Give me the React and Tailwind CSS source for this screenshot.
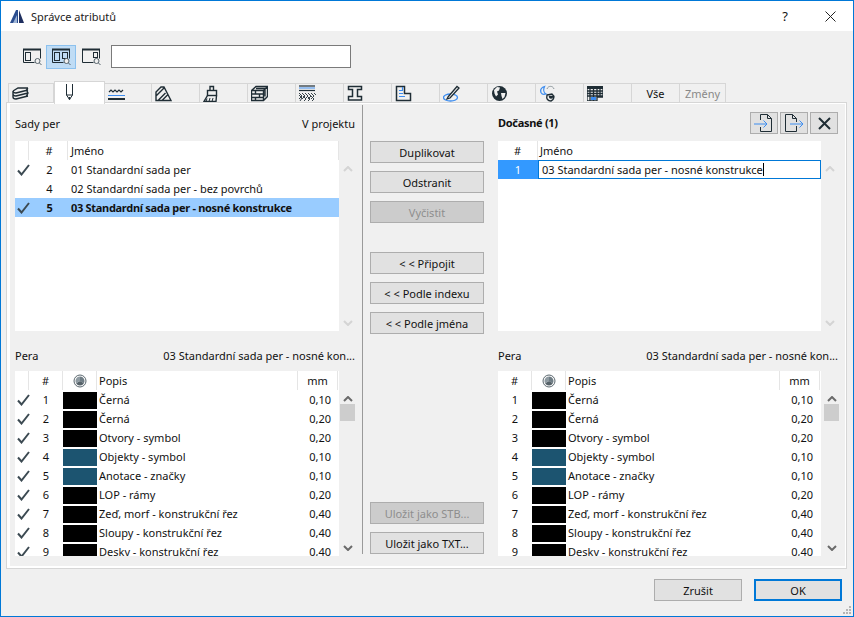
import React from 'react';

const ink = '#1f2d35';
const blue = '#3d8df0';

const Svg = ({ w = 17, h = 17, className = '', children }) => (
  <svg width={w} height={h} viewBox={`0 0 ${w} ${h}`} fill="none" stroke={ink} strokeWidth="1" className={className}>
    {children}
  </svg>
);

// okna s lupou v horni liste
const Magnifier = () => (
  <>
    <circle cx="14.500" cy="13" r="2.500" fill="#f0f0f0" stroke="#55636b" />
    <path d="M16.500 15l2 2" stroke="#55636b" />
  </>
);
const ViewLeft = () => (
  <Svg w={19} h={18}>
    <path d="M.5 1.500v13h11M17.500 1.500v9" />
    <path d="M0 1.500h18" strokeWidth="2" />
    <rect x="2.500" y="4.500" width="5" height="8" />
    <Magnifier />
  </Svg>
);
const ViewBoth = () => (
  <Svg w={19} h={18}>
    <path d="M.5 1.500v13h11M17.500 1.500v9" />
    <path d="M0 1.500h18" strokeWidth="2" />
    <rect x="2.500" y="4.500" width="5" height="8" />
    <rect x="10.500" y="4.500" width="5" height="6" />
    <Magnifier />
  </Svg>
);
const ViewRight = () => (
  <Svg w={19} h={18}>
    <path d="M.5 1.500v13h11M17.500 1.500v9" />
    <path d="M0 1.500h18" strokeWidth="2" />
    <rect x="11.500" y="4.500" width="4" height="5" />
    <Magnifier />
  </Svg>
);

const tabIcons = [
  <Svg key="layers">
    <path d="M1 6l5-3h10M1 6c0 1.500 1 2 3 2l12-3M1 9c0 1.500 1 2 3 2l12-3M1 12c0 1.500 1 2 3 2l12-3M1 6v6M16 3l-1.500 2 1.500 3-1.500 3" strokeWidth="1.400" />
  </Svg>,
  <Svg key="pen" w={9} h={17}>
    <path d="M1.500 0v11l3 4.500 3-4.500V0M1.500 11h6" />
    <path d="M4.500 13v2.500" strokeWidth="1.500" />
  </Svg>,
  <Svg key="line">
    <path d="M1 7l2-2 2 2 2-2 2 2 2-2 2 2 2-2" strokeWidth="1.200" />
    <path d="M0 10.500h17" stroke={blue} />
    <path d="M0 14h17" strokeWidth="2" />
  </Svg>,
  <Svg key="hatch">
    <path d="M1 15.500V7l5-5h3l7 13.500zM1 11l8-8M3.500 15l7-7M7.500 15l5-5" strokeWidth="1.400" />
  </Svg>,
  <Svg key="brush">
    <rect x="4.500" y="5.500" width="9" height="5" strokeWidth="1.400" />
    <path d="M7 5.500V1.500h3.500v4M4.500 10.500L1 16.500h12l.5-6" strokeWidth="1.400" />
    <path d="M4 13.500l-1 3M7 13l-1 3.500M10 13l-1 3.500" />
  </Svg>,
  <Svg key="bricks">
    <path d="M.5 5.500L5 1.500h11.500v10l-4 4H.5zM.5 5.500h12v10M12.500 5.500l4-4M.5 9h12M.5 12.500h12M4.500 5.500V9M8.500 9v3.500M4.500 12.500v3M14 4.500v7M5 3.500h9" strokeWidth="1.400" />
  </Svg>,
  <Svg key="composite">
    <path d="M0 1h16" strokeWidth="1.200" />
    <path d="M0 3h16" stroke={blue} />
    <path d="M0 5.500h16" strokeWidth="1.200" />
    <path d="M0 8l3 3-3 3M3 8l3 3-3 3M6 8l3 3-3 3M9 8l3 3-3 3M12 8l3 3-3 3M15 8l2 2M0 10l3 3-2 3M4 11l3 3-2 2M8 11l3 3-2 2M12 11l3 3-2 2" stroke="#37434a" />
  </Svg>,
  <Svg key="profile">
    <path d="M1.500 1.500h13v3h-4v7h4v3.500h-13v-3.500h4v-7h-4z" strokeWidth="1.500" />
  </Svg>,
  <Svg key="zone">
    <path d="M1.500 1.500h8v7h6v7h-14z" strokeWidth="1.500" />
    <path d="M4 5.500h4M4 8.500h4M4 11.500h6M7.500 2v3" stroke={blue} strokeWidth="1.200" />
  </Svg>,
  <Svg key="pencil">
    <ellipse cx="7.500" cy="12.500" rx="7" ry="3.500" stroke={blue} strokeWidth="1.300" />
    <path d="M5 12l9-10.500 2 1.500-9 10-3 1z" fill="#f0f0f0" strokeWidth="1.300" />
  </Svg>,
  <Svg key="globe">
    <circle cx="8.500" cy="8.500" r="7.500" fill={ink} strokeWidth="0" />
    <path d="M3 5l3-3 3 .5-1 3-2 1 1 3-2 2-1.500-3zM10 8h4.500l-1 4-2 2-1-3z" fill="#f0f0f0" strokeWidth="0" />
  </Svg>,
  <Svg key="surface">
    <path d="M5.500 1.500c-3 1-4.500 3-3.500 6 1 2 3.500 2 5 1.500-2-1-3-4-1.500-7.500z" stroke={blue} strokeWidth="1.300" />
    <path d="M8 4c1-3.500 6-3.500 7 0" stroke="#8d979c" />
    <path d="M8 10l5-1c3 2 2 6-1 7-3 0-5-2-4-6zM10.500 11.500a1.500 1.500 0 1 0 3 0z" strokeWidth="1.400" />
  </Svg>,
  <Svg key="grid" w={16} h={15}>
    <rect x="0" y="0" width="16" height="3" fill={ink} strokeWidth="0" />
    <path d="M0 0h16v11h-6v4H0zM0 5h16M0 7.500h16M0 10h16M3 0v15M6.500 0v15M10 0v11M13 0v11" stroke={ink} strokeWidth="1.300" />
    <rect x="4" y="11" width="5" height="3" fill={blue} strokeWidth="0" />
  </Svg>,
];

const tabWidths = [46, 51, 47, 48, 48, 48, 48, 48, 48, 48, 48, 48, 48, 48, 46];

const Btn = ({ children, disabled, className = '' }) => (
  <div
    className={`h-[22px] flex items-center justify-center border border-[#adadad] ${
      disabled ? 'bg-[#cccccc] text-[#8e8e8e]' : 'bg-[#e1e1e1] text-[#111]'
    } ${className}`}
  >
    {children}
  </div>
);

const Chevron = ({ down, light }) => (
  <svg width="10" height="6" viewBox="0 0 10 6" fill="none" stroke={light ? '#d4d4d4' : '#6a6a6a'} strokeWidth="2">
    <path d={down ? 'M1 1l4 4 4-4' : 'M1 5l4-4 4 4'} />
  </svg>
);

const Check = () => (
  <svg width="13" height="12" viewBox="0 0 13 12" fill="none" stroke="#3c4a52" strokeWidth="2">
    <path d="M1 6.500l3.500 4L12 1" />
  </svg>
);

const HeadCell = ({ className = '', children }) => (
  <div className={`h-full flex items-center border-r border-[#e5e5e5] ${className}`}>{children}</div>
);

const PenWheel = () => (
  <svg width="14" height="14" viewBox="0 0 14 14" fill="none">
    <circle cx="7" cy="7" r="6" fill="#f8f8f8" stroke="#5b686f" />
    <path d="M7 7V2.500A4.500 4.500 0 0 1 10.900 9.250z" fill="#6f7d85" />
    <path d="M7 7l3.900 2.250A4.500 4.500 0 0 1 3.100 9.250z" fill="#566269" />
    <path d="M7 7L3.100 9.250A4.500 4.500 0 0 1 7 2.500z" fill="#8e9aa1" />
  </svg>
);

const Scrollbar = ({ light, thumb, className = '' }) => (
  <div className={`pt-[25px] pb-[5px] flex flex-col items-center justify-between ${className}`}>
    <div className="w-full flex flex-col items-center">
      <Chevron light={light} />
      {thumb && <div className="mt-[2px] w-full h-[17px] bg-[#cdcdcd]" />}
    </div>
    <Chevron down light={light} />
  </div>
);

const pens = [
  [1, '#000', 'Černá', '0,10'],
  [2, '#000', 'Černá', '0,20'],
  [3, '#000', 'Otvory - symbol', '0,20'],
  [4, '#1c5470', 'Objekty - symbol', '0,10'],
  [5, '#1c5470', 'Anotace - značky', '0,10'],
  [6, '#000', 'LOP - rámy', '0,20'],
  [7, '#000', 'Zeď, morf - konstrukční řez', '0,40'],
  [8, '#000', 'Sloupy - konstrukční řez', '0,40'],
  [9, '#000', 'Desky - konstrukční řez', '0,40'],
];

const PenList = ({ checks }) => (
  <div className="flex-1 h-[185px] bg-white overflow-hidden">
    <div className="h-[19px] flex items-center">
      {checks && <HeadCell className="w-[14px]" />}
      <HeadCell className="w-[34px] justify-center">#</HeadCell>
      <HeadCell className="w-[34px] justify-center"><PenWheel /></HeadCell>
      <HeadCell className="flex-1 pl-[2px]">Popis</HeadCell>
      <HeadCell className="w-[40px] justify-center">mm</HeadCell>
      <div className="w-px" />
    </div>
    {pens.map(([n, color, name, mm]) => (
      <div key={n} className="h-[19px] flex items-center">
        {checks && <div className="w-[14px] pl-[2px]"><Check /></div>}
        <div className="w-[34px] text-center">{n}</div>
        <div className="w-[34px] h-[17px] mt-[2px]" style={{ backgroundColor: color }} />
        <div className="flex-1 pl-[2px]">{name}</div>
        <div className="w-[41px] text-right pr-[8px]">{mm}</div>
      </div>
    ))}
  </div>
);

const sets = [
  { check: true, n: 2, name: '01 Standardní sada per' },
  { check: false, n: 4, name: '02 Standardní sada per - bez povrchů' },
  { check: true, n: 5, name: '03 Standardní sada per - nosné konstrukce', active: true },
];

const FileArrow = ({ flip }) => (
  <svg width="20" height="18" viewBox="0 0 20 18" fill="none" stroke={ink}>
    {flip ? (
      <>
        <path d="M1.500 13V.5h7l4 4V8M1.500 13v4.500h11V12M8.500.5v4h4" />
        <path d="M6 10h13M15.500 6.500l3.500 3.500-3.500 3.500" stroke={blue} />
      </>
    ) : (
      <>
        <path d="M6.500 6V.5h7l4 4v13h-11V13M13.500.5v4h4" />
        <path d="M0 10h13M9.500 6.500l3.500 3.500-3.500 3.500" stroke={blue} />
      </>
    )}
  </svg>
);

const IconBtn = ({ children }) => (
  <div className="w-[28px] h-[22px] flex items-center justify-center border border-[#adadad] bg-[#e1e1e1]">{children}</div>
);

export default function App() {
  return (
    <div
      className="w-[854px] h-[617px] flex flex-col bg-[#f0f0f0] border border-[#0078d7] text-[11px] leading-none text-[#111] overflow-hidden"
      style={{ fontFamily: '"Noto Sans", sans-serif' }}
    >
      {/* titulek */}
      <div className="h-[30px] shrink-0 bg-white flex items-center">
        <svg width="14" height="15" viewBox="0 0 14 15" className="ml-[9px]">
          <path d="M0 14L6 1h2v13z" fill="#2a4d8f" />
          <path d="M9 1l5 13H9z" fill="#1f2f5f" />
          <path d="M3 14l4-8v8z" fill="#9db4d6" />
        </svg>
        <span className="ml-[7px] text-[#222]">Správce atributů</span>
        <span className="ml-auto text-[13px] mr-[37px]">?</span>
        <svg width="11" height="11" viewBox="0 0 11 11" stroke="#222" className="mr-[17px]">
          <path d="M.5.5l10 10M10.500.5l-10 10" />
        </svg>
      </div>

      {/* horni lista */}
      <div className="h-[50px] shrink-0 flex items-center pl-[19px] pt-[1px]">
        <div className="w-[25px] h-6 flex items-center justify-center mr-px"><ViewLeft /></div>
        <div className="w-[30px] h-6 flex items-center justify-center bg-[#bfdcf5] border border-[#8cc1ee]"><ViewBoth /></div>
        <div className="w-[30px] h-6 flex items-center justify-center"><ViewRight /></div>
        <div className="ml-[5px] w-[240px] h-[23px] bg-white border border-[#7a7a7a]" />
      </div>

      {/* zalozky */}
      <div className="h-[21px] shrink-0 pl-[7px] flex items-end relative z-10">
        {tabWidths.map((w, i) => {
          const active = i === 1;
          const label = i === 13 ? 'Vše' : i === 14 ? 'Změny' : null;
          return (
            <div
              key={i}
              style={{ width: w }}
              className={`flex items-center border-t border-r border-[#d6d6d6] ${i === 0 ? 'border-l' : ''} ${
                active ? 'h-[23px] -mb-[2px] bg-white pl-[10px] pb-[2px] border-l' : 'h-[19px] pl-[3px]'
              } ${label ? 'justify-center !pl-0' : ''} ${i === 14 ? 'text-[#888]' : ''}`}
            >
              {label || tabIcons[i]}
            </div>
          );
        })}
      </div>

      {/* panel */}
      <div className="ml-[5px] mr-[6px] h-[467px] shrink-0 border border-[#d6d6d6] bg-white">
        <div className="ml-[3px] mr-px mt-px h-[462px] bg-[#f0f0f0] flex">
          {/* levy sloupec */}
          <div className="w-[352px] pl-[5px] pr-[7px] flex flex-col">
            <div className="h-[37px] flex items-end justify-between pb-[12px]">
              <span>Sady per</span>
              <span>V projektu</span>
            </div>
            <div className="flex h-[190px]">
              <div className="flex-1 bg-white">
                <div className="h-[19px] flex items-center">
                  <HeadCell className="w-[14px]" />
                  <HeadCell className="w-[39px] justify-center pl-[2px]">#</HeadCell>
                  <HeadCell className="flex-1 pl-[3px]">Jméno</HeadCell>
                </div>
                {sets.map((s) => (
                  <div key={s.n} className={`h-[19px] flex items-center ${s.active ? 'bg-[#99ccff] font-bold tracking-[-0.3px]' : ''}`}>
                    <div className="w-[14px] pl-[2px]">{s.check && <Check />}</div>
                    <div className="w-[39px] text-center pl-[2px]">{s.n}</div>
                    <div className="flex-1 pl-[3px]">{s.name}</div>
                  </div>
                ))}
              </div>
              <Scrollbar light className="ml-px w-[15px]" />
            </div>
            <div className="h-[40px] flex items-end justify-between pb-[10px]">
              <span>Pera</span>
              <span>03 Standardní sada per - nosné kon...</span>
            </div>
            <div className="flex">
              <PenList checks />
              <Scrollbar thumb className="ml-px w-[15px]" />
            </div>
          </div>

          {/* prostredni tlacitka */}
          <div className="w-[123px] h-[449px] border-l border-[#9a9a9a] mt-[1px] pl-[7px] pr-px pt-[36px] flex flex-col">
            <Btn>Duplikovat</Btn>
            <Btn className="mt-2">Odstranit</Btn>
            <Btn className="mt-2" disabled>Vyčistit</Btn>
            <Btn className="mt-[29px]">&lt; &lt; Připojit</Btn>
            <Btn className="mt-2">&lt; &lt; Podle indexu</Btn>
            <Btn className="mt-2">&lt; &lt; Podle jména</Btn>
            <Btn className="mt-auto" disabled>Uložit jako STB...</Btn>
            <Btn className="mt-2">Uložit jako TXT...</Btn>
          </div>

          {/* pravy sloupec */}
          <div className="flex-1 pl-[13px] pr-[7px] flex flex-col">
            <div className="h-[37px] flex items-start justify-between">
              <span className="font-bold tracking-[-0.3px] mt-[13px]">Dočasné (1)</span>
              <div className="flex gap-[2px] mt-[8px]">
                <IconBtn><FileArrow /></IconBtn>
                <IconBtn><FileArrow flip /></IconBtn>
                <IconBtn>
                  <svg width="13" height="13" viewBox="0 0 13 13" stroke={ink} strokeWidth="2"><path d="M1 1l11 11M12 1L1 12" /></svg>
                </IconBtn>
              </div>
            </div>
            <div className="flex h-[190px]">
              <div className="flex-1 bg-white">
                <div className="h-[19px] flex items-center">
                  <HeadCell className="w-[40px] justify-center">#</HeadCell>
                  <div className="pl-[2px]">Jméno</div>
                </div>
                <div className="h-[19px] flex items-center">
                  <div className="w-[40px] h-full flex items-center justify-center bg-[#3399ff] text-white">1</div>
                  <div className="flex-1 h-full flex items-center border border-[#0078d7] pl-[3px]">
                    03 Standardní sada per - nosné konstrukce
                    <span className="w-px h-[13px] bg-black" />
                  </div>
                </div>
              </div>
              <Scrollbar light className="ml-px w-4" />
            </div>
            <div className="h-[40px] flex items-end justify-between pb-[10px]">
              <span>Pera</span>
              <span>03 Standardní sada per - nosné kon...</span>
            </div>
            <div className="flex">
              <PenList />
              <Scrollbar thumb className="ml-[3px] -mr-px w-[15px]" />
            </div>
          </div>
        </div>
      </div>

      {/* paticka */}
      <div className="flex-1 relative flex items-start justify-end pt-[10px] pr-[11px] gap-3">
        <Btn className="w-[88px]">Zrušit</Btn>
        <Btn className="w-[88px] !border-2 !border-[#0078d7]">OK</Btn>
        <svg width="10" height="10" viewBox="0 0 10 10" fill="#b5b5b5" className="absolute right-px bottom-px">
          <rect x="7" y="1" width="2" height="2" />
          <rect x="4" y="4" width="2" height="2" />
          <rect x="7" y="4" width="2" height="2" />
          <rect x="1" y="7" width="2" height="2" />
          <rect x="4" y="7" width="2" height="2" />
          <rect x="7" y="7" width="2" height="2" />
        </svg>
      </div>
    </div>
  );
}
